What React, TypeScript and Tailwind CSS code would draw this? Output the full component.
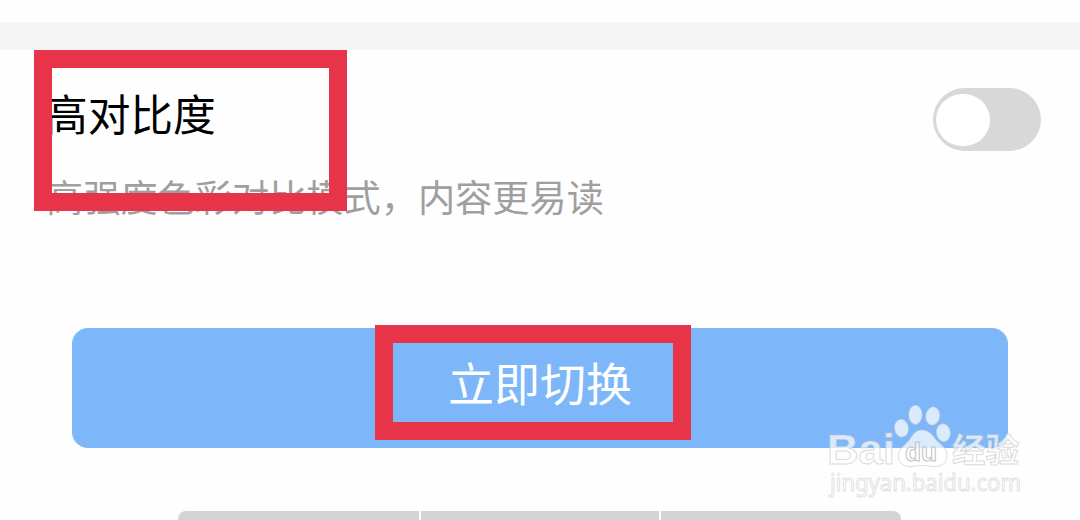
function ToggleSwitch() {
  return (
    <div className="mt-[38px] flex h-[63px] w-[108px] shrink-0 items-center rounded-full bg-[#d8d8d8] pl-[3px]">
      <div className="h-[52px] w-[54px] rounded-full bg-white" />
    </div>
  );
}

function Watermark() {
  return (
    <svg
      className="pointer-events-none absolute left-[810px] top-[390px]"
      width="250"
      height="125"
      viewBox="810 390 250 125"
      fill="#fff"
      fillOpacity="0.72"
      stroke="#bfc4c8"
      strokeOpacity="0.6"
      strokeWidth="1"
      strokeLinejoin="round"
      fontFamily="'Liberation Sans', 'Noto Sans CJK SC', sans-serif"
    >
      <text x="827" y="464" fontSize="43" fontWeight="700" textLength="68" lengthAdjust="spacingAndGlyphs">Bai</text>
      <ellipse cx="901.5" cy="428.2" rx="7" ry="9" transform="rotate(-8 901.5 428.2)" />
      <ellipse cx="915.4" cy="414.8" rx="6.7" ry="9.6" />
      <ellipse cx="932.7" cy="416" rx="7" ry="9.2" transform="rotate(10 932.7 416)" />
      <ellipse cx="943.4" cy="432.7" rx="7" ry="9" transform="rotate(-8 943.4 432.7)" />
      <path d="M921.500 430c-5.500 0-8.500 4-11.500 9-4 6-11.500 9-11.500 17 0 7 5 10.500 11.500 10.500 5 0 8-1 12.500-1s8 1 12.500 1c7.500 0 12-4.500 12-11 0-8-7-11-12-17-4-5-7-8.500-13.500-8.500z" />
      <text x="905" y="461" fontSize="25" fontWeight="700" textLength="32" lengthAdjust="spacingAndGlyphs" fillOpacity="0.6" strokeOpacity="1">du</text>
      <text x="952" y="462" fontSize="33" fontWeight="700" textLength="67" lengthAdjust="spacingAndGlyphs">经验</text>
      <text x="830" y="491" fontSize="23" fontFamily="'Noto Sans', sans-serif" strokeOpacity="0.5" textLength="191" lengthAdjust="spacingAndGlyphs">jingyan.baidu.com</text>
    </svg>
  );
}

export default function App() {
  return (
    <div className="relative flex h-[520px] w-[1080px] flex-col overflow-hidden bg-[#fefefe] font-['Noto_Sans_CJK_SC',sans-serif]">
      <div className="mt-[22px] h-7 shrink-0 bg-[#f5f5f5]" />

      <section className="flex h-[278px] shrink-0 items-start justify-between pl-[45px] pr-[39px]">
        <div className="whitespace-nowrap">
          <h1 className="mt-[32px] text-[42.7px] leading-[60px] text-black">高对比度</h1>
          <p className="mt-[26px] pl-px text-[37.2px] leading-[56px] text-[#9f9f9f]">
            高强度色彩对比模式，内容更易读
          </p>
        </div>
        <ToggleSwitch />
      </section>

      <button className="mx-[72px] flex h-[120px] shrink-0 items-center justify-center rounded-2xl bg-[#7eb7f9] pb-[15px] text-[46px] leading-none text-white">
        立即切换
      </button>

      <div className="ml-[178px] mt-auto flex h-[9px] w-[723px] gap-[2px] overflow-hidden rounded-t-lg">
        <div className="w-[241px] bg-[#d4d4d6]" />
        <div className="w-[238px] bg-[#d4d4d6]" />
        <div className="flex-1 bg-[#d4d4d6]" />
      </div>

      {/* highlight frames */}
      <div className="absolute left-[34px] top-[50px] h-[161px] w-[313px] border-[18px] border-[#e83448]" />
      <div className="absolute left-[375px] top-[325px] h-[115px] w-[316px] border-[18px] border-[#e83448]" />

      <Watermark />
    </div>
  );
}
